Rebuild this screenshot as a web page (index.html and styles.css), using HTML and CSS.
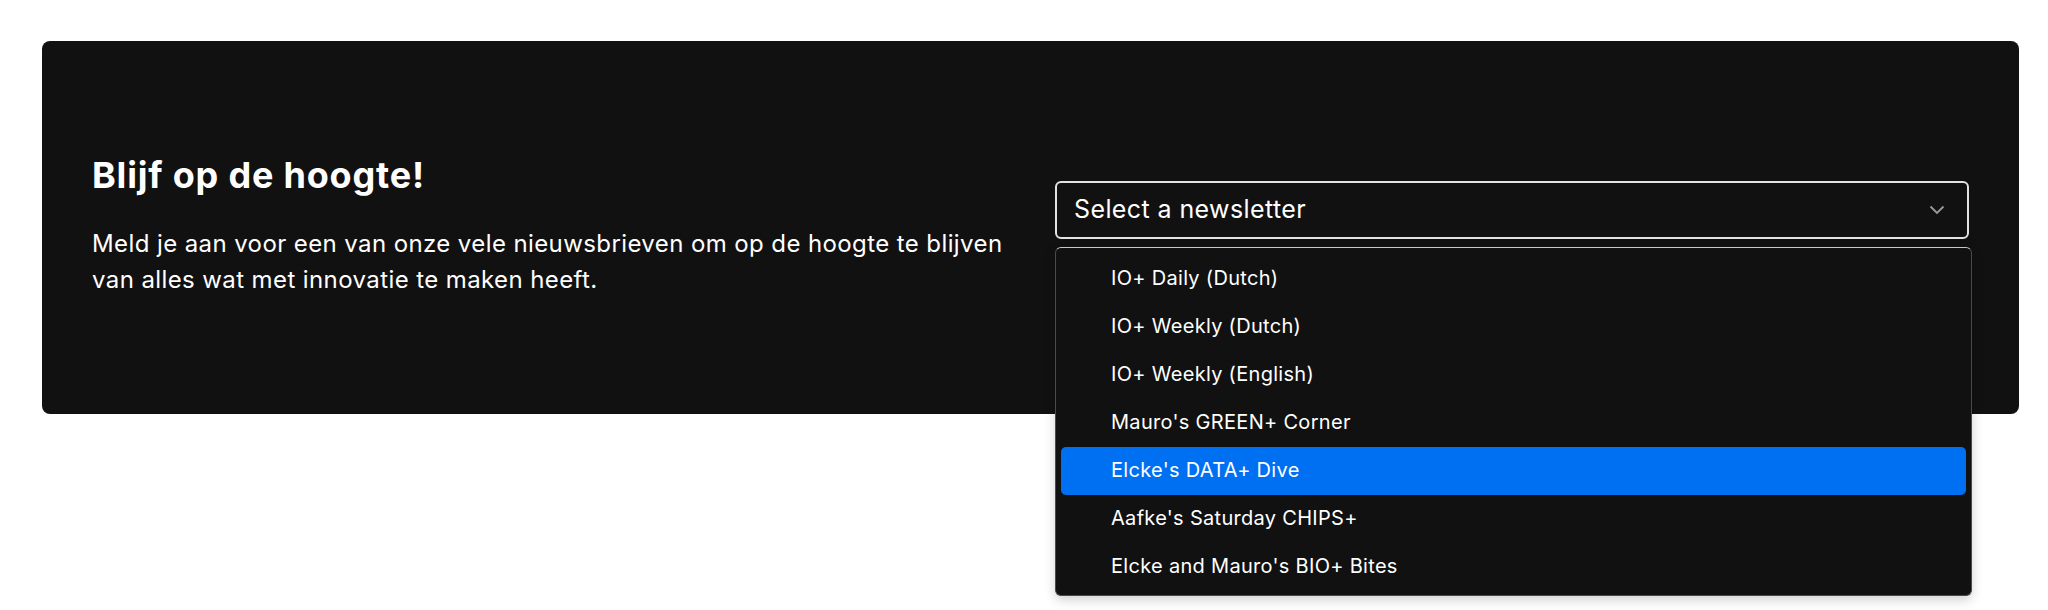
FILE: index.html
```html
<!DOCTYPE html>
<html lang="nl">
  <head>
    <meta charset="UTF-8" />
    <meta name="viewport" content="width=device-width, initial-scale=1.0" />
    <title>Nieuwsbrief</title>
    <link rel="stylesheet" href="styles.css">
  </head>
  <body>
    <div class="newsletter">
      <div class="left">
        <div class="title">Blijf op de hoogte!</div>
        <div class="sub-title">
          Meld je aan voor een van onze vele nieuwsbrieven om op de hoogte te blijven van alles wat met innovatie te maken heeft.
        </div>
      </div>
      <div class="right">
        <div class="select">
          <span>Select a newsletter</span>
          <svg class="chevron" width="16" height="10" viewBox="0 0 16 10">
            <path d="M1.5 1.5 L8 8 L14.5 1.5" fill="none" stroke="#9a9a9a" stroke-width="1.8" />
          </svg>
        </div>
        <div class="options">
          <div class="option">IO+ Daily (Dutch)</div>
          <div class="option">IO+ Weekly (Dutch)</div>
          <div class="option">IO+ Weekly (English)</div>
          <div class="option">Mauro's GREEN+ Corner</div>
          <div class="option active">Elcke's DATA+ Dive</div>
          <div class="option">Aafke's Saturday CHIPS+</div>
          <div class="option">Elcke and Mauro's BIO+ Bites</div>
        </div>
      </div>
    </div>
  </body>
</html>
```

FILE: styles.css
```css
html {
  background: white;
}
body {
  margin: 0;
  min-height: 610px;
  box-sizing: border-box;
  padding: 41px 29px 0 42px;
  font-family: Inter, "Noto Sans", sans-serif;
  background: white;
  color: white;
}
.newsletter {
  background: #111111;
  border-radius: 8px;
  padding: 114px 50px 116px;
  display: grid;
  grid-template-columns: 1fr 1fr;
  column-gap: 49px;
  align-items: start;
}
.title {
  font-size: 36px;
  line-height: 40px;
  font-weight: 700;
  letter-spacing: 0.8px;
}
.sub-title {
  margin-top: 31px;
  font-size: 24px;
  line-height: 36px;
  letter-spacing: 0.4px;
}
.right {
  position: relative;
  margin-top: 26px;
}
.select {
  height: 58px;
  box-sizing: border-box;
  border: 2px solid #e2e2e2;
  border-radius: 6px;
  display: flex;
  align-items: center;
  justify-content: space-between;
  padding: 0 22px 3px 17px;
  font-size: 25px;
  letter-spacing: 0.4px;
}
.chevron {
  display: block;
  margin-top: 3px;
}
.options {
  position: absolute;
  top: 66px;
  left: 0;
  right: -3px;
  background: #111111;
  border: 1px solid #4a4a4a;
  border-top-color: #c8c8c8;
  border-radius: 6px;
  padding: 7px 5px 4px;
  box-shadow: 0 4px 12px rgba(0, 0, 0, 0.18);
}
.option {
  height: 48px;
  box-sizing: border-box;
  display: flex;
  align-items: center;
  padding: 0 0 3px 50px;
  font-size: 20px;
  letter-spacing: 0.3px;
  border-radius: 5px;
}
.option.active {
  background: #0070f3;
}
```
